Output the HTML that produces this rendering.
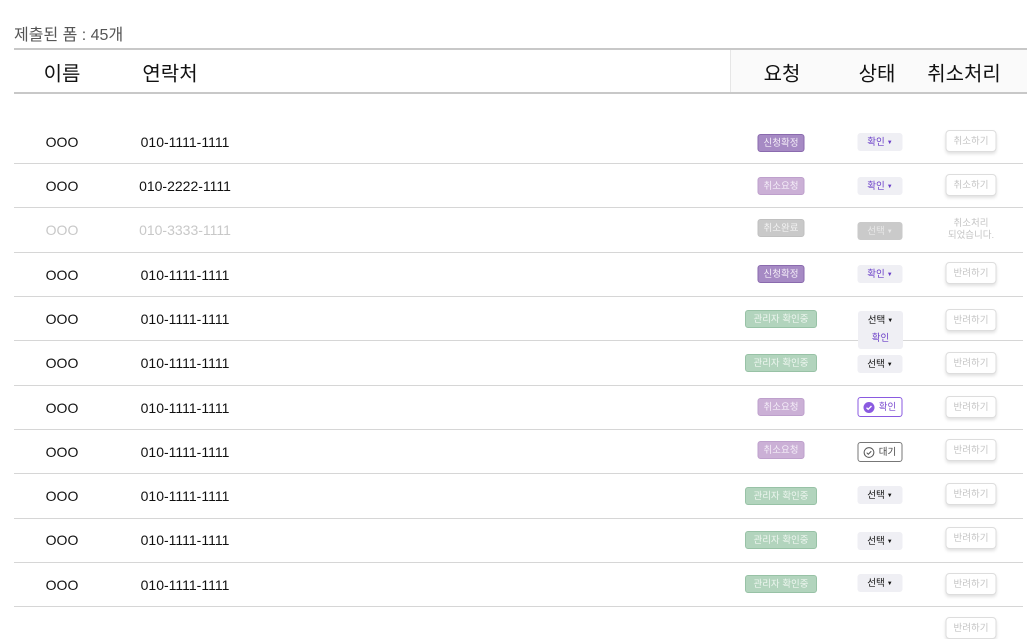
<!DOCTYPE html>
<html><head><meta charset="utf-8"><style>
*{margin:0;padding:0;box-sizing:border-box}
body{width:1031px;height:617px;overflow:hidden;background:#fff;font-family:"Liberation Sans","Noto Sans CJK KR",sans-serif;position:relative;color:#111}
.a{position:absolute}
.t{position:absolute;transform:translate(-50%,-50%);white-space:nowrap}
.hl{position:absolute;left:14px;width:1013px;height:2px;background:#c8c8c8}
.sep{position:absolute;left:14px;width:1009px;height:1px;background:#d6d6d6}
.badge,.st,.btn{display:flex;align-items:center;justify-content:center;line-height:1}
.badge{position:absolute;transform:translate(-50%,-50%);height:18px;border-radius:3px;font-size:9.5px;text-align:center;color:#f4eef8;white-space:nowrap;padding-top:1px}
.b1{background:#a68ac4;border:1px solid #8a6aae;width:47px}
.b2{background:#cbb0d6;border:1px solid #bea0cc;width:47px}
.b3{background:#c9c9c9;border:1px solid #c0c0c0;width:47px;color:#f2f2f2}
.b4{background:#b2d4bd;border:1px solid #98c2a6;width:72px;color:#eef6f0}
.st{position:absolute;transform:translate(-50%,-50%);width:45px;height:18px;border-radius:3px;background:#efeff4;font-size:9.5px;text-align:center;color:#111;white-space:nowrap;padding-top:1px}
.st.p{color:#6a3ec8}
.st i{font-style:normal;font-size:6px;margin-left:2px}
.btn{position:absolute;transform:translate(-50%,-50%);width:51px;height:22px;border:1px solid #ddd;border-radius:4px;background:#fff;box-shadow:0 2px 3px rgba(0,0,0,.12);font-size:9.5px;text-align:center;color:#c4c4c4;white-space:nowrap;padding-top:1px}
.n{font-size:14px}
</style></head><body>
<div class="a" style="left:14px;top:21px;font-size:16px;color:#555">제출된 폼 : 45개</div>
<div class="hl" style="top:48px"></div>
<div class="a" style="left:730px;top:50px;width:297px;height:42px;background:#fafafa;border-left:1px solid #e6e6e6"></div>
<div class="hl" style="top:92px"></div>
<div class="t" style="left:62px;top:72px;font-size:20px">이름</div>
<div class="t" style="left:170px;top:72px;font-size:20px">연락처</div>
<div class="t" style="left:782px;top:72px;font-size:20px">요청</div>
<div class="t" style="left:877px;top:72px;font-size:20px">상태</div>
<div class="t" style="left:964px;top:72px;font-size:20px">취소처리</div>

<div class="t n" style="left:62px;top:142px">OOO</div><div class="t n" style="left:185px;top:142px">010-1111-1111</div>
<div class="badge b1" style="left:781px;top:143px">신청확정</div><div class="st p" style="left:880px;top:142px">확인<i>▼</i></div><div class="btn" style="left:971px;top:141px">취소하기</div>
<div class="sep" style="top:163px"></div>

<div class="t n" style="left:62px;top:186px">OOO</div><div class="t n" style="left:185px;top:186px">010-2222-1111</div>
<div class="badge b2" style="left:781px;top:186px">취소요청</div><div class="st p" style="left:880px;top:186px">확인<i>▼</i></div><div class="btn" style="left:971px;top:185px">취소하기</div>
<div class="sep" style="top:207px"></div>

<div class="t n" style="left:62px;top:230px;color:#c8c8c8">OOO</div><div class="t n" style="left:185px;top:230px;color:#c8c8c8">010-3333-1111</div>
<div class="badge b3" style="left:781px;top:228px">취소완료</div><div class="st" style="left:880px;top:231px;background:#cacaca;color:#e8e8e8">선택<i>▼</i></div>
<div class="t" style="left:971px;top:230px;font-size:9.5px;line-height:12px;text-align:center;color:#c4c4c4">취소처리<br>되었습니다.</div>
<div class="sep" style="top:252px"></div>

<div class="t n" style="left:62px;top:275px">OOO</div><div class="t n" style="left:185px;top:275px">010-1111-1111</div>
<div class="badge b1" style="left:781px;top:274px">신청확정</div><div class="st p" style="left:880px;top:274px">확인<i>▼</i></div><div class="btn" style="left:971px;top:273px">반려하기</div>
<div class="sep" style="top:296px"></div>

<div class="t n" style="left:62px;top:319px">OOO</div><div class="t n" style="left:185px;top:319px">010-1111-1111</div>
<div class="badge b4" style="left:781px;top:319px">관리자 확인중</div>
<div class="btn" style="left:971px;top:320px">반려하기</div>
<div class="sep" style="top:340px"></div>
<div class="a" style="left:858px;top:311px;width:45px;height:38px;border-radius:3px;background:#efeff4;font-size:9.5px;text-align:center;line-height:18px;padding-top:1px">선택<i style="font-style:normal;font-size:6px;vertical-align:1px;margin-left:2px">▼</i><br><span style="color:#6a3ec8">확인</span></div>

<div class="t n" style="left:62px;top:363px">OOO</div><div class="t n" style="left:185px;top:363px">010-1111-1111</div>
<div class="badge b4" style="left:781px;top:363px">관리자 확인중</div><div class="st" style="left:880px;top:364px">선택<i>▼</i></div><div class="btn" style="left:971px;top:363px">반려하기</div>
<div class="sep" style="top:385px"></div>

<div class="t n" style="left:62px;top:408px">OOO</div><div class="t n" style="left:185px;top:408px">010-1111-1111</div>
<div class="badge b2" style="left:781px;top:407px">취소요청</div>
<div class="st" style="left:880px;top:407px;width:45px;height:20px;background:#fff;border:1px solid #8a5ae0;color:#7a4ad0"><svg width="11" height="11" viewBox="0 0 12 12" style="margin-right:4px"><circle cx="6" cy="6" r="6" fill="#8a5ae0"/><path d="M3.3 6.2l1.8 1.8 3.6-3.6" stroke="#fff" stroke-width="1.5" fill="none"/></svg>확인</div>
<div class="btn" style="left:971px;top:407px">반려하기</div>
<div class="sep" style="top:429px"></div>

<div class="t n" style="left:62px;top:452px">OOO</div><div class="t n" style="left:185px;top:452px">010-1111-1111</div>
<div class="badge b2" style="left:781px;top:450px">취소요청</div>
<div class="st" style="left:880px;top:452px;width:45px;height:20px;background:#fff;border:1px solid #777;color:#444"><svg width="11" height="11" viewBox="0 0 12 12" style="margin-right:4px"><circle cx="6" cy="6" r="5.3" fill="none" stroke="#555" stroke-width="1.1"/><path d="M3.5 6.2l1.7 1.7 3.3-3.3" stroke="#555" stroke-width="1.1" fill="none"/></svg>대기</div>
<div class="btn" style="left:971px;top:450px">반려하기</div>
<div class="sep" style="top:473px"></div>

<div class="t n" style="left:62px;top:496px">OOO</div><div class="t n" style="left:185px;top:496px">010-1111-1111</div>
<div class="badge b4" style="left:781px;top:496px">관리자 확인중</div><div class="st" style="left:880px;top:495px">선택<i>▼</i></div><div class="btn" style="left:971px;top:494px">반려하기</div>
<div class="sep" style="top:518px"></div>

<div class="t n" style="left:62px;top:540px">OOO</div><div class="t n" style="left:185px;top:540px">010-1111-1111</div>
<div class="badge b4" style="left:781px;top:540px">관리자 확인중</div><div class="st" style="left:880px;top:541px">선택<i>▼</i></div><div class="btn" style="left:971px;top:538px">반려하기</div>
<div class="sep" style="top:562px"></div>

<div class="t n" style="left:62px;top:585px">OOO</div><div class="t n" style="left:185px;top:585px">010-1111-1111</div>
<div class="badge b4" style="left:781px;top:584px">관리자 확인중</div><div class="st" style="left:880px;top:583px">선택<i>▼</i></div><div class="btn" style="left:971px;top:584px">반려하기</div>
<div class="sep" style="top:606px"></div>
<div class="btn" style="left:971px;top:628px">반려하기</div>
</body></html>
